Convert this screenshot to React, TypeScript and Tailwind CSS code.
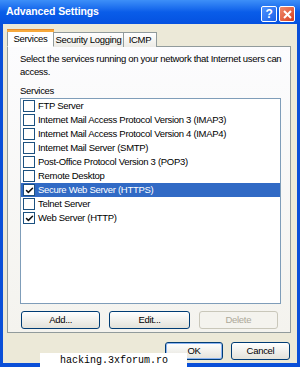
import { Check } from "lucide-react";

const services = [
  { name: "FTP Server", checked: false },
  { name: "Internet Mail Access Protocol Version 3 (IMAP3)", checked: false },
  { name: "Internet Mail Access Protocol Version 4 (IMAP4)", checked: false },
  { name: "Internet Mail Server (SMTP)", checked: false },
  { name: "Post-Office Protocol Version 3 (POP3)", checked: false },
  { name: "Remote Desktop", checked: false },
  { name: "Secure Web Server (HTTPS)", checked: true, selected: true },
  { name: "Telnet Server", checked: false },
  { name: "Web Server (HTTP)", checked: true },
];

function XpButton({ label, disabled, primary, w }: { label: string; disabled?: boolean; primary?: boolean; w: string }) {
  return (
    <div
      className={`${w} h-[18px] rounded-[3px] border flex items-center justify-center leading-none ${
        disabled
          ? "border-[#c9c7ba] bg-[#f4f3ee] text-[#aca899]"
          : "border-[#003c74] bg-gradient-to-b from-white to-[#e3e2da] text-black"
      } ${primary ? "shadow-[inset_0_0_0_1px_#8cb4f2]" : ""}`}
    >
      {label}
    </div>
  );
}

function App() {
  return (
    <div
      className="relative w-[300px] h-[367px] overflow-hidden bg-[#0a4fd8] flex flex-col text-[9.5px] tracking-[-0.3px]"
      style={{ fontFamily: '"Liberation Sans", Arial, sans-serif' }}
    >
      {/* title bar */}
      <div className="h-[24px] shrink-0 flex items-center justify-between pl-[6px] pr-[5px] bg-gradient-to-b from-[#3d8ff8] via-[#0a5de9] to-[#0551e0]">
        <span className="text-white font-bold text-[10.5px] tracking-[-0.1px]">
          Advanced Settings
        </span>
        <div className="flex gap-[2px] mt-[4px]">
          <div className="w-[16px] h-[16px] rounded-[2px] border border-white bg-gradient-to-br from-[#4f93ff] to-[#1a5ee8] flex items-center justify-center text-white font-bold text-[12px] leading-none">
            ?
          </div>
          <div className="w-[16px] h-[16px] rounded-[2px] border border-white bg-gradient-to-br from-[#f08a6c] to-[#d63b1a] flex items-center justify-center">
            <svg width="9" height="9" viewBox="0 0 9 9">
              <path d="M1 1 L8 8 M8 1 L1 8" stroke="white" strokeWidth="2" />
            </svg>
          </div>
        </div>
      </div>

      {/* body */}
      <div className="flex-1 mx-[3px] mb-[4px] bg-[#ece9d8] flex flex-col pl-[4px] pr-[6px] pt-[5px]">
        {/* tabs */}
        <div className="flex items-end h-[18px] relative z-10">
          <div className="h-[18px] w-[47px] bg-white border-x border-[#919b9c] border-b border-b-white flex flex-col">
            <div className="h-[3px] bg-[#f7a93c] border-t border-[#e68b2c] -mx-px" />
            <div className="flex-1 flex items-center justify-center">Services</div>
          </div>
          <div className="h-[15px] w-[70px] bg-gradient-to-b from-white to-[#ecebe6] border-t border-r border-[#919b9c] flex items-center justify-center">
            Security Logging
          </div>
          <div className="h-[15px] w-[33px] bg-gradient-to-b from-white to-[#ecebe6] border-t border-r border-[#919b9c] flex items-center justify-center">
            ICMP
          </div>
        </div>

        {/* panel */}
        <div className="-mt-px w-[284px] h-[287px] border border-[#919b9c] bg-gradient-to-b from-[#fcfcfe] to-[#f4f3ee] flex flex-col px-[12px] pt-[5px]">
          <p className="w-[264px] leading-[13px] text-black">
            Select the services running on your network that Internet users can access.
          </p>
          <div className="mt-[6px] leading-[13px]">Services</div>
          <div className="mt-[1px] w-[261px] h-[206px] border border-[#7f9db9] bg-white flex flex-col">
            {services.map((s) => (
              <div
                key={s.name}
                className={`h-[14px] flex items-center gap-[3px] pl-[2px] leading-none ${
                  s.selected ? "bg-[#316ac5] text-white" : "text-black"
                }`}
              >
                <div className="w-[12px] h-[12px] border border-[#1c5180] bg-white flex items-center justify-center">
                  {s.checked && <Check size={9} strokeWidth={4} color="#111" />}
                </div>
                <span className="whitespace-nowrap">{s.name}</span>
              </div>
            ))}
          </div>
          <div className="mt-[7px] flex gap-[9px] pl-[1px]">
            <XpButton label="Add..." w="w-[80px]" />
            <XpButton label="Edit..." w="w-[81px]" />
            <XpButton label="Delete" w="w-[80px]" disabled />
          </div>
        </div>

        <div className="mt-[9px] flex justify-end gap-[8px] pr-[1px]">
          <XpButton label="OK" w="w-[58px]" primary />
          <XpButton label="Cancel" w="w-[59px]" />
        </div>
      </div>

      {/* watermark overlay */}
      <div
        className="absolute left-[40px] top-[353px] w-[147px] h-[14px] bg-white flex items-center pl-[20px] text-[10px] tracking-normal text-black"
        style={{ fontFamily: '"Liberation Mono", monospace' }}
      >
        hacking.3xforum.ro
      </div>
    </div>
  );
}

export default App;
